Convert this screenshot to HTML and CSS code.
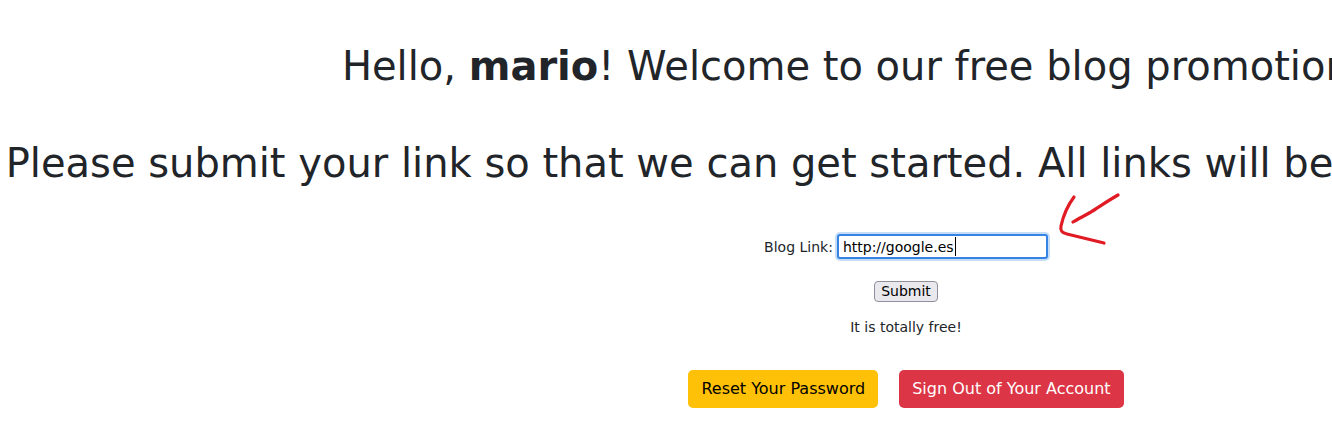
FILE: index.html
```html
<!DOCTYPE html>
<html lang="en">
<head>
<meta charset="utf-8">
<title>Blog Promotion</title>
<link rel="stylesheet" href="styles.css">
</head>
<body>
<main class="page">
  <h1 class="title greeting">Hello, <b>mario</b>! Welcome to our free blog promotion page.</h1>
  <h1 class="title intro">Please submit your link so that we can get started. All links will be reviewed by our team.</h1>
  <form class="link-form">
    <div class="field-row">
      <label class="field-label" for="blog">Blog Link:</label>
      <span class="field-wrap">
        <input class="field-input" id="blog" type="text" value="http://google.es">
        <span class="caret"></span>
        <svg class="arrow" width="70" height="60" viewBox="0 0 70 60" aria-hidden="true">
          <path d="M61 2 C52 7 42 14 34 19 C27 23 21 26 16 29" fill="none" stroke="#e01b24" stroke-width="3.2" stroke-linecap="round"/>
          <path d="M17 4 C11 12 6 24 4 33 C3 38 5 40 10 41 C22 44 35 47 47 50" fill="none" stroke="#e01b24" stroke-width="3.2" stroke-linecap="round"/>
        </svg>
      </span>
    </div>
    <div class="submit-row">
      <button class="submit-btn" type="button">Submit</button>
    </div>
    <p class="note">It is totally free!</p>
  </form>
  <div class="actions">
    <a class="btn btn-warning" href="#">Reset Your Password</a>
    <a class="btn btn-danger" href="#">Sign Out of Your Account</a>
  </div>
</main>
</body>
</html>
```
FILE: styles.css
```css
html, body {
  margin: 0;
  padding: 0;
  overflow: hidden;
  background: #fff;
}
body {
  font-family: "DejaVu Sans", sans-serif;
  color: #212529;
  font-size: 16px;
}
.page {
  width: 1812px;
  text-align: center;
}
.title {
  font-size: 40px;
  font-weight: 400;
  line-height: 48px;
  white-space: nowrap;
  margin: 0;
}
.title b {
  font-weight: 700;
}
.greeting {
  padding-top: 42px;
  padding-left: 6px;
}
.intro {
  margin-top: 49px;
  padding-right: 8px;
}
.link-form {
  margin-top: 47px;
}
.field-row {
  display: flex;
  justify-content: center;
  align-items: center;
  gap: 4px;
  height: 25px;
}
.field-label {
  font-size: 14px;
}
.field-wrap {
  position: relative;
  display: block;
  height: 25px;
}
.field-input {
  display: block;
  box-sizing: border-box;
  width: 211px;
  height: 25px;
  border: 2px solid #3584e4;
  border-radius: 3px;
  box-shadow: 0 0 0 2px #c6ddf8;
  font-family: "DejaVu Sans", sans-serif;
  font-size: 14px;
  color: #000;
  padding: 0 4px;
  margin: 0;
  outline: none;
}
.caret {
  position: absolute;
  left: 118px;
  top: 3px;
  width: 1px;
  height: 19px;
  background: #000;
}
.arrow {
  position: absolute;
  left: 220px;
  top: -41px;
}
.submit-row {
  margin-top: 22px;
}
.submit-btn {
  display: inline-block;
  font-family: "DejaVu Sans", sans-serif;
  font-size: 14px;
  line-height: 19px;
  color: #000;
  background: #e9e9ed;
  border: 1px solid #8f8f9d;
  border-radius: 4px;
  height: 21px;
  padding: 0 6px;
  margin: 0;
  vertical-align: top;
}
.note {
  font-size: 14px;
  line-height: 20px;
  margin: 15px 0 0;
}
.actions {
  margin-top: 33px;
  display: flex;
  justify-content: center;
  gap: 21px;
}
.btn {
  display: inline-block;
  font-size: 16px;
  line-height: 24px;
  padding: 7px 13px;
  border-radius: 5px;
  text-decoration: none;
}
.btn-warning {
  background: #ffc107;
  color: #000;
}
.btn-danger {
  background: #dc3545;
  color: #fff;
}
```
